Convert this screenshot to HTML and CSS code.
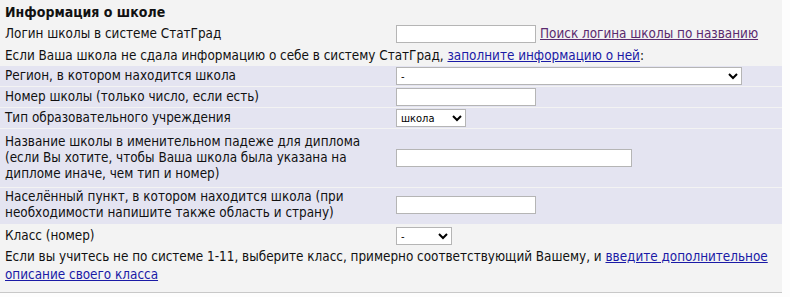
FILE: index.html
```html
<!DOCTYPE html>
<html lang="ru">
<head>
    <meta charset="UTF-8">
    <title>Информация о школе</title>
    <link rel="stylesheet" href="styles.css">
</head>
<body>
    <table class="form">
        <tr class="plain">
            <td colspan="2" class="caption">Информация о школе</td>
        </tr>
        <tr class="plain">
            <td class="label">Логин школы в системе СтатГрад</td>
            <td><div class="inline"><input type="text" class="w140"> <a href="#" class="visited">Поиск логина школы по названию</a></div></td>
        </tr>
        <tr class="plain note">
            <td colspan="2">Если Ваша школа не сдала информацию о себе в систему СтатГрад, <a href="#">заполните информацию о ней</a>:</td>
        </tr>
        <tr class="lav">
            <td class="label">Регион, в котором находится школа</td>
            <td><select class="w346"><option>-</option></select></td>
        </tr>
        <tr class="lav">
            <td class="label">Номер школы (только число, если есть)</td>
            <td><input type="text" class="w140"></td>
        </tr>
        <tr class="lav">
            <td class="label">Тип образовательного учреждения</td>
            <td><select class="w70"><option>школа</option></select></td>
        </tr>
        <tr class="lav name">
            <td class="label">Название школы в именительном падеже для диплома (если Вы хотите, чтобы Ваша школа была указана на дипломе иначе, чем тип и номер)</td>
            <td><input type="text" class="w236"></td>
        </tr>
        <tr class="lav town">
            <td class="label">Населённый пункт, в котором находится школа (при необходимости напишите также область и страну)</td>
            <td><input type="text" class="w140"></td>
        </tr>
        <tr class="plain grade">
            <td class="label">Класс (номер)</td>
            <td><select class="w56"><option>-</option></select></td>
        </tr>
        <tr class="plain last">
            <td colspan="2">Если вы учитесь не по системе 1-11, выберите класс, примерно соответствующий Вашему, и <a href="#">введите дополнительное описание своего класса</a></td>
        </tr>
    </table>
</body>
</html>
```
FILE: styles.css
```css
/* Basic page */
body {
    margin: 0;
    padding: 0;
    background-color: #fdfdfd;
    font-family: "DejaVu Sans Condensed", "DejaVu Sans", sans-serif;
    font-size: 13.4px;
    color: #111;
}

/* Form table */
.form {
    width: 782px;
    border-collapse: separate;
    border-spacing: 0 1px;
    border-bottom: 1px solid #c8c8c8;
    padding-bottom: 5px;
    background-color: #f3f3f3;
}

.form td {
    padding: 2px 5px;
    line-height: 16px;
    vertical-align: middle;
}

.form td.label {
    width: 381px;
}

.form .caption {
    font-weight: bold;
    font-size: 14px;
    padding-top: 3px;
}

.plain td {
    background-color: #f3f3f3;
}

.note td {
    padding-bottom: 1px;
}

.lav td {
    background-color: #e4e4f1;
    padding-top: 1px;
    padding-bottom: 1px;
}

.name td {
    padding-top: 5px;
    padding-bottom: 5px;
}

.town td {
    padding-top: 1px;
    padding-bottom: 3px;
}

.grade td {
    padding-top: 2px;
}

.last td {
    line-height: 18px;
    padding-top: 0;
    padding-bottom: 2px;
}

/* Controls */
.inline {
    display: flex;
    align-items: center;
    gap: 4px;
}

.form input,
.form select {
    display: block;
    height: 18px;
    box-sizing: border-box;
    border: 1px solid #b5b5b5;
    background-color: #fff;
    font-family: inherit;
    font-size: 12px;
    margin: 0;
    padding: 0 3px;
}

.form select {
    font-size: 11px;
    padding: 0;
}

.w140 { width: 140px; }
.w346 { width: 346px; }
.w236 { width: 236px; }
.w70  { width: 70px; }
.w56  { width: 56px; }

a {
    color: #1a1aa6;
}

a.visited {
    color: #5a2a6e;
}
```
